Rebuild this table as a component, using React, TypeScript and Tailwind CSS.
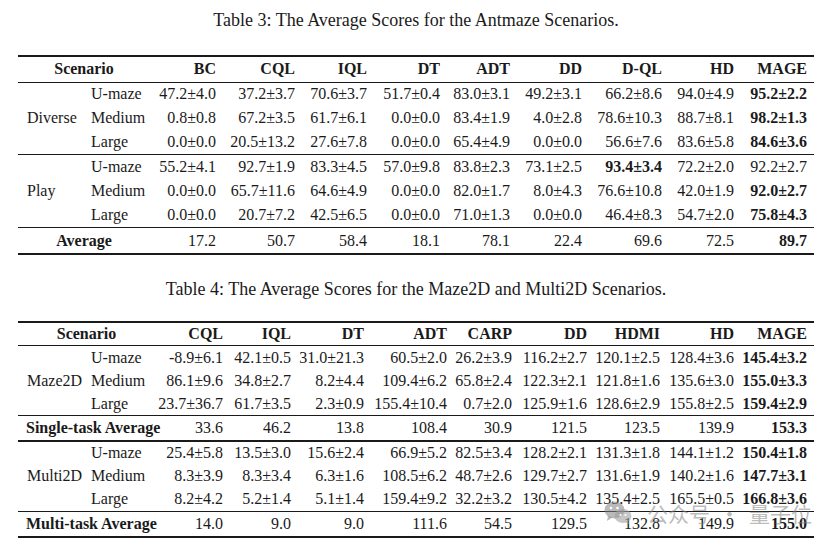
import React from "react";

type Cell = { v: string; b?: boolean };
type Group = { name: string; rows: { label: string; cells: Cell[] }[] };

const c = (v: string, b = false): Cell => ({ v, b });
const row = (vals: string[], best: string): Cell[] => vals.map((v) => c(v)).concat(c(best, true));

const antCols = ["BC", "CQL", "IQL", "DT", "ADT", "DD", "D-QL", "HD", "MAGE"];
const antWidths = [66, 66, 73, 79, 72, 73, 70, 72, 80, 72, 73];

const antGroups: Group[] = [
  {
    name: "Diverse",
    rows: [
      { label: "U-maze", cells: row(["47.2±4.0", "37.2±3.7", "70.6±3.7", "51.7±0.4", "83.0±3.1", "49.2±3.1", "66.2±8.6", "94.0±4.9"], "95.2±2.2") },
      { label: "Medium", cells: row(["0.8±0.8", "67.2±3.5", "61.7±6.1", "0.0±0.0", "83.4±1.9", "4.0±2.8", "78.6±10.3", "88.7±8.1"], "98.2±1.3") },
      { label: "Large", cells: row(["0.0±0.0", "20.5±13.2", "27.6±7.8", "0.0±0.0", "65.4±4.9", "0.0±0.0", "56.6±7.6", "83.6±5.8"], "84.6±3.6") },
    ],
  },
  {
    name: "Play",
    rows: [
      { label: "U-maze", cells: [c("55.2±4.1"), c("92.7±1.9"), c("83.3±4.5"), c("57.0±9.8"), c("83.8±2.3"), c("73.1±2.5"), c("93.4±3.4", true), c("72.2±2.0"), c("92.2±2.7")] },
      { label: "Medium", cells: row(["0.0±0.0", "65.7±11.6", "64.6±4.9", "0.0±0.0", "82.0±1.7", "8.0±4.3", "76.6±10.8", "42.0±1.9"], "92.0±2.7") },
      { label: "Large", cells: row(["0.0±0.0", "20.7±7.2", "42.5±6.5", "0.0±0.0", "71.0±1.3", "0.0±0.0", "46.4±8.3", "54.7±2.0"], "75.8±4.3") },
    ],
  },
];
const antAvg = row(["17.2", "50.7", "58.4", "18.1", "78.1", "22.4", "69.6", "72.5"], "89.7");

const mazeCols = ["CQL", "IQL", "DT", "ADT", "CARP", "DD", "HDMI", "HD", "MAGE"];
const mazeWidths = [66, 71, 75, 68, 73, 83, 65, 75, 73, 74, 73];

const maze2d: Group = {
  name: "Maze2D",
  rows: [
    { label: "U-maze", cells: row(["-8.9±6.1", "42.1±0.5", "31.0±21.3", "60.5±2.0", "26.2±3.9", "116.2±2.7", "120.1±2.5", "128.4±3.6"], "145.4±3.2") },
    { label: "Medium", cells: row(["86.1±9.6", "34.8±2.7", "8.2±4.4", "109.4±6.2", "65.8±2.4", "122.3±2.1", "121.8±1.6", "135.6±3.0"], "155.0±3.3") },
    { label: "Large", cells: row(["23.7±36.7", "61.7±3.5", "2.3±0.9", "155.4±10.4", "0.7±2.0", "125.9±1.6", "128.6±2.9", "155.8±2.5"], "159.4±2.9") },
  ],
};
const multi2d: Group = {
  name: "Multi2D",
  rows: [
    { label: "U-maze", cells: row(["25.4±5.8", "13.5±3.0", "15.6±2.4", "66.9±5.2", "82.5±3.4", "128.2±2.1", "131.3±1.8", "144.1±1.2"], "150.4±1.8") },
    { label: "Medium", cells: row(["8.3±3.9", "8.3±3.4", "6.3±1.6", "108.5±6.2", "48.7±2.6", "129.7±2.7", "131.6±1.9", "140.2±1.6"], "147.7±3.1") },
    { label: "Large", cells: row(["8.2±4.2", "5.2±1.4", "5.1±1.4", "159.4±9.2", "32.2±3.2", "130.5±4.2", "135.4±2.5", "165.5±0.5"], "166.8±3.6") },
  ],
};
const singleAvg = row(["33.6", "46.2", "13.8", "108.4", "30.9", "121.5", "123.5", "139.9"], "153.3");
const multiAvg = row(["14.0", "9.0", "9.0", "111.6", "54.5", "129.5", "132.8", "149.9"], "155.0");

const Num = ({ cell }: { cell: Cell }) => (
  <td className={`text-right pr-[7px] whitespace-nowrap ${cell.b ? "font-bold" : ""}`}>{cell.v}</td>
);

const GroupRows = ({ g, h, topBorder }: { g: Group; h: string; topBorder: string }) => (
  <>
    {g.rows.map((r, i) => (
      <tr key={r.label} className={`${h} ${i === 0 ? topBorder : ""}`}>
        {i === 0 && (
          <td rowSpan={3} className="pl-[9px] align-middle">
            {g.name}
          </td>
        )}
        <td className="pl-[7px]">{r.label}</td>
        {r.cells.map((cell, j) => (
          <Num key={j} cell={cell} />
        ))}
      </tr>
    ))}
  </>
);

const App = () => {
  return (
    <div
      className="relative w-[830px] h-[549px] bg-white text-[#1a1a1a] overflow-hidden"
      style={{ fontFamily: '"Liberation Serif", "Times New Roman", serif' }}
    >
      <div className="pl-[18px] w-[814px]">
        {/* Table 3 */}
        <p className="text-center text-[18px] leading-[20px] pt-[10px]">
          Table 3: The Average Scores for the Antmaze Scenarios.
        </p>
        <table className="table-fixed border-collapse w-[796px] mt-[25px] text-[16px] leading-none">
          <colgroup>
            {antWidths.map((w, i) => (
              <col key={i} style={{ width: w }} />
            ))}
          </colgroup>
          <thead>
            <tr className="h-[26px] border-t-2 border-b border-[#1a1a1a] font-bold">
              <th colSpan={2} className="text-center">Scenario</th>
              {antCols.map((h) => (
                <th key={h} className="text-right pr-[7px]">{h}</th>
              ))}
            </tr>
          </thead>
          <tbody>
            <GroupRows g={antGroups[0]} h="h-[24.3px]" topBorder="" />
            <GroupRows g={antGroups[1]} h="h-[24.3px]" topBorder="border-t border-[#1a1a1a]" />
            <tr className="h-[26px] border-t border-b-2 border-[#1a1a1a]">
              <td colSpan={2} className="text-center font-bold">Average</td>
              {antAvg.map((cell, j) => (
                <Num key={j} cell={cell} />
              ))}
            </tr>
          </tbody>
        </table>

        {/* Table 4 */}
        <p className="text-center text-[18px] leading-[20px] mt-[24px]">
          Table 4: The Average Scores for the Maze2D and Multi2D Scenarios.
        </p>
        <table className="table-fixed border-collapse w-[796px] mt-[22px] text-[16px] leading-none">
          <colgroup>
            {mazeWidths.map((w, i) => (
              <col key={i} style={{ width: w }} />
            ))}
          </colgroup>
          <thead>
            <tr className="h-[24px] border-t-2 border-b border-[#1a1a1a] font-bold">
              <th colSpan={2} className="text-center">Scenario</th>
              {mazeCols.map((h) => (
                <th key={h} className="text-right pr-[7px]">{h}</th>
              ))}
            </tr>
          </thead>
          <tbody>
            <GroupRows g={maze2d} h="h-[23.4px]" topBorder="" />
            <tr className="h-[25px] border-t border-b-2 border-[#1a1a1a]">
              <td colSpan={2} className="pl-[8px] font-bold whitespace-nowrap">Single-task Average</td>
              {singleAvg.map((cell, j) => (
                <Num key={j} cell={cell} />
              ))}
            </tr>
            <GroupRows g={multi2d} h="h-[23.4px]" topBorder="" />
            <tr className="h-[26px] border-t border-b-2 border-[#1a1a1a]">
              <td colSpan={2} className="pl-[8px] font-bold whitespace-nowrap">Multi-task Average</td>
              {multiAvg.map((cell, j) => (
                <Num key={j} cell={cell} />
              ))}
            </tr>
          </tbody>
        </table>
      </div>

      {/* watermark */}
      <div className="absolute left-[604px] top-[501px] flex items-center text-[rgba(130,130,130,0.55)]">
        <svg width="28" height="24" viewBox="0 0 28 24" className="mr-[15px]">
          <ellipse cx="10.5" cy="9" rx="10" ry="8.5" fill="rgba(130,130,130,0.55)" />
          <path d="M4 15 L3 20 L8.5 16.5 Z" fill="rgba(130,130,130,0.55)" />
          <ellipse cx="19" cy="15" rx="8.5" ry="7" fill="rgba(160,160,160,0.6)" />
          <path d="M24 20 L25.5 23.5 L21 21 Z" fill="rgba(160,160,160,0.6)" />
          <circle cx="7" cy="7" r="1.3" fill="white" />
          <circle cx="13.5" cy="7" r="1.3" fill="white" />
          <circle cx="16.5" cy="14" r="1.1" fill="white" />
          <circle cx="21.5" cy="14" r="1.1" fill="white" />
        </svg>
        <span
          className="text-[21px] leading-none flex items-center gap-[9px]"
          style={{ fontFamily: '"Noto Sans CJK SC", sans-serif' }}
        >
          <span>公众号</span>
          <span>·</span>
          <span>量子位</span>
        </span>
      </div>
    </div>
  );
};

export default App;
